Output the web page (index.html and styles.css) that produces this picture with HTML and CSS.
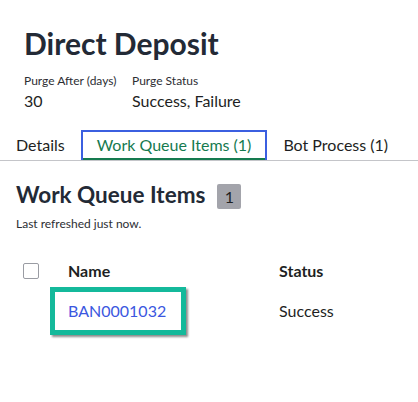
FILE: index.html
```html
<!DOCTYPE html>
<html lang="en">
<head>
<meta charset="utf-8">
<title>Direct Deposit</title>
<link rel="stylesheet" href="styles.css">
</head>
<body>
<header class="header">
  <h1 class="title">Direct Deposit</h1>
  <div class="meta">
    <div class="meta-item meta-purge">
      <div class="meta-label">Purge After (days)</div>
      <div class="meta-value">30</div>
    </div>
    <div class="meta-item">
      <div class="meta-label">Purge Status</div>
      <div class="meta-value">Success, Failure</div>
    </div>
  </div>
</header>
<nav class="tabs">
  <div class="tab">Details</div>
  <div class="tab tab-active">Work Queue Items (1)</div>
  <div class="tab">Bot Process (1)</div>
</nav>
<section class="section">
  <div class="section-head">
    <h2 class="section-title">Work Queue Items</h2>
    <span class="badge">1</span>
  </div>
  <p class="refreshed">Last refreshed just now.</p>
  <div class="table">
    <div class="cell cell-check"><span class="checkbox"></span></div>
    <div class="cell th">Name</div>
    <div class="cell th">Status</div>
    <div class="cell"></div>
    <div class="cell"><span class="link-wrap"><a class="link" href="#">BAN0001032</a><span class="highlight"></span></span></div>
    <div class="cell">Success</div>
  </div>
</section>
</body>
</html>
```
FILE: styles.css
```css
* { box-sizing: border-box; }
body {
  margin: 0;
  font-family: Lato, "Open Sans", sans-serif;
  color: #1e1f23;
  background: #fff;
  width: 418px;
  height: 402px;
  overflow: hidden;
}
.header { padding: 25px 24px 0; }
.title {
  margin: 0;
  font-size: 30px;
  font-weight: 700;
  line-height: 36px;
  color: #232a36;
}
.meta { display: flex; margin-top: 12px; }
.meta-purge { width: 108px; }
.meta-label { font-size: 12px; line-height: 16px; color: #2c2e33; }
.meta-value { font-size: 16px; line-height: 20px; margin-top: 2px; color: #1e1f23; }
.tabs {
  display: flex;
  margin-top: 19px;
  border-bottom: 1px solid #c4c5c9;
}
.tab {
  font-size: 16px;
  line-height: 26px;
  padding: 0 14px 2px;
  color: #1e1f23;
  border: 2px solid transparent;
  border-bottom: 0;
}
.tab-active {
  color: #157a4f;
  border-color: #3b5fe0;
  border-bottom: 0;
  box-shadow: inset 0 -2px 0 #157a4f;
}
.section { padding: 0 16px; }
.section-head { display: flex; align-items: flex-start; margin-top: 20px; gap: 12px; }
.section-title {
  margin: 0;
  font-size: 22.5px;
  font-weight: 700;
  line-height: 28px;
  color: #232a36;
}
.badge {
  display: inline-block;
  margin-top: 3px;
  width: 24px;
  height: 25px;
  line-height: 25px;
  text-align: center;
  background: #a3a4ab;
  border-radius: 2px;
  font-size: 16px;
  color: #1e1f23;
}
.refreshed { margin: 7px 0 0; font-size: 12px; line-height: 16px; color: #2c2e33; }
.table {
  display: grid;
  grid-template-columns: 52px 211px 1fr;
  grid-auto-rows: 40px;
  margin-top: 19px;
  align-items: center;
}
.cell { font-size: 16px; line-height: 20px; }
.cell-check { padding-left: 7px; display: flex; }
.checkbox {
  width: 16px;
  height: 16px;
  border: 1px solid #9a9ca3;
  border-radius: 2px;
  background: #fff;
}
.th { font-weight: 700; color: #1e1f23; }
.link-wrap { position: relative; display: inline-block; }
.link { color: #3b57e0; text-decoration: none; }
.highlight {
  position: absolute;
  left: -18px;
  right: -20px;
  top: -14px;
  bottom: -14px;
  border: 5px solid #14b99b;
  box-shadow: 2px 2px 2px rgba(0,0,0,0.45);
}
```
